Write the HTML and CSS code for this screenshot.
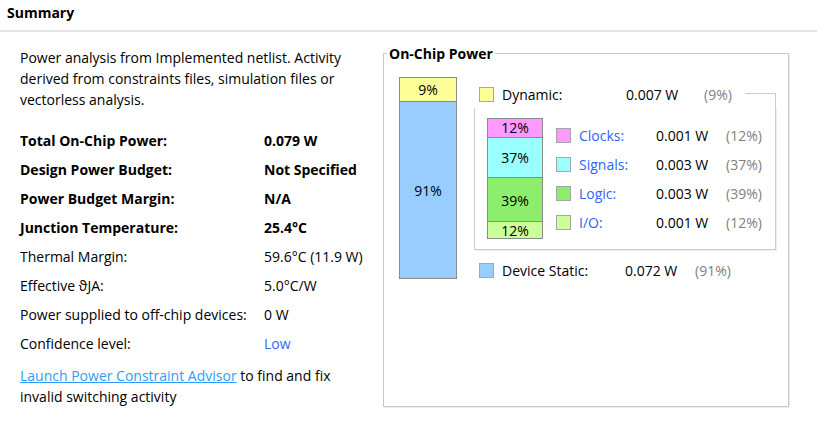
FILE: index.html
```html
<!DOCTYPE html>
<html>
<head>
<meta charset="utf-8">
<link rel="stylesheet" href="styles.css">
</head>
<body>
<div class="header">Summary</div>
<div class="content">
  <div class="left">
    <p class="para">Power analysis from Implemented netlist. Activity derived from constraints files, simulation files or vectorless analysis.</p>
    <div class="rows">
      <div class="row bold"><span class="label">Total On-Chip Power:</span><span>0.079 W</span></div>
      <div class="row bold"><span class="label">Design Power Budget:</span><span>Not Specified</span></div>
      <div class="row bold"><span class="label">Power Budget Margin:</span><span>N/A</span></div>
      <div class="row bold"><span class="label">Junction Temperature:</span><span>25.4°C</span></div>
      <div class="row"><span class="label">Thermal Margin:</span><span>59.6°C (11.9 W)</span></div>
      <div class="row"><span class="label">Effective ϑJA:</span><span>5.0°C/W</span></div>
      <div class="row"><span class="label">Power supplied to off-chip devices:</span><span>0 W</span></div>
      <div class="row"><span class="label">Confidence level:</span><span class="low">Low</span></div>
    </div>
    <p class="advisor"><a class="link" href="#">Launch Power Constraint Advisor</a> to find and fix invalid switching activity</p>
  </div>
  <div class="group">
    <div class="legend">On-Chip Power</div>
    <div class="group-inner">
      <div class="mainbar">
        <div class="seg seg-dyn">9%</div>
        <div class="seg seg-static">91%</div>
      </div>
      <div class="right">
        <div class="item-row dyn-row">
          <span class="sq c-yellow"></span>
          <span class="d-label">Dynamic:</span>
          <span class="d-value">0.007 W</span>
          <span class="pct">(9%)</span>
        </div>
        <div class="dyn-box">
          <div class="subbar">
            <div class="sub s-clk">12%</div>
            <div class="sub s-sig">37%</div>
            <div class="sub s-log">39%</div>
            <div class="sub s-io">12%</div>
          </div>
          <div class="sub-list">
            <div class="item-row sub-row"><span class="sq c-pink"></span><span class="s-label">Clocks:</span><span class="s-value">0.001 W</span><span class="pct">(12%)</span></div>
            <div class="item-row sub-row"><span class="sq c-cyan"></span><span class="s-label">Signals:</span><span class="s-value">0.003 W</span><span class="pct">(37%)</span></div>
            <div class="item-row sub-row"><span class="sq c-green"></span><span class="s-label">Logic:</span><span class="s-value">0.003 W</span><span class="pct">(39%)</span></div>
            <div class="item-row sub-row"><span class="sq c-lime"></span><span class="s-label">I/O:</span><span class="s-value">0.001 W</span><span class="pct">(12%)</span></div>
          </div>
        </div>
        <div class="item-row static-row">
          <span class="sq c-blue"></span>
          <span class="st-label">Device Static:</span>
          <span class="st-value">0.072 W</span>
          <span class="pct">(91%)</span>
        </div>
      </div>
    </div>
  </div>
</div>
</body>
</html>
```
FILE: styles.css
```css
html, body {
  margin: 0;
  padding: 0;
}
body {
  width: 817px;
  height: 432px;
  overflow: hidden;
  background: #ffffff;
  color: #000000;
  font-family: "Open Sans", "Noto Sans", "DejaVu Sans", sans-serif;
  font-size: 14px;
}
.header {
  height: 30px;
  line-height: 25px;
  padding-left: 7px;
  font-weight: bold;
  font-size: 14px;
  border-bottom: 2px solid #e6e6e6;
}
.content {
  display: flex;
  align-items: flex-start;
  padding-left: 20px;
}
.left {
  width: 363px;
  padding-top: 15px;
}
.para {
  margin: 0;
  width: 345px;
  line-height: 21px;
}
.rows {
  margin-top: 16px;
}
.row {
  display: flex;
  height: 29px;
  line-height: 29px;
  white-space: nowrap;
}
.row.bold {
  font-weight: bold;
}
.label {
  width: 244px;
  flex: none;
}
.low {
  color: #3366ff;
}
.advisor {
  margin: 7px 0 0 0;
  line-height: 21px;
  width: 335px;
}
.link {
  color: #2e9bff;
  text-decoration: underline;
}

/* On-Chip Power group */
.group {
  position: relative;
  margin-top: 21px;
  width: 404px;
  height: 352px;
  border: 1px solid #c9c9c9;
  box-shadow: 1px 1px 0 #ececec;
  padding: 0;
}
.legend {
  position: absolute;
  top: -10px;
  left: 3px;
  padding: 0 2px;
  background: #ffffff;
  font-weight: bold;
  line-height: 19px;
}
.group-inner {
  display: flex;
  align-items: flex-start;
  padding: 23px 0 0 15px;
}
.mainbar {
  width: 58px;
  height: 202px;
  box-sizing: border-box;
  border: 1px solid #8a8a8a;
  display: flex;
  flex-direction: column;
}
.seg {
  text-align: center;
}
.seg-dyn {
  height: 23px;
  line-height: 23px;
  background: #ffff99;
}
.seg-static {
  flex: 1;
  background: #99ccff;
  border-top: 1px solid #8a8a8a;
  display: flex;
  align-items: center;
  justify-content: center;
}
.right {
  margin-left: 17px;
  width: 302px;
}
.item-row {
  display: flex;
  align-items: center;
  white-space: nowrap;
}
.sq {
  width: 13px;
  height: 13px;
  border: 1px solid #a6a6a6;
  flex: none;
  margin-right: 8px;
}
.c-yellow { background: #ffff99; }
.c-blue { background: #99ccff; }
.c-pink { background: #ff99ff; }
.c-cyan { background: #99ffff; }
.c-green { background: #8cee6c; }
.c-lime { background: #ccff99; }
.pct {
  color: #808080;
}
.dyn-row {
  height: 20px;
  margin-top: 7px;
  padding-left: 5px;
}
.d-label { width: 124px; }
.d-value { width: 78px; }
.dyn-box {
  position: relative;
  margin-top: 4px;
  display: flex;
  align-items: center;
  padding: 10px 0 10px 12px;
  border-left: 1px solid #cdcdcd;
  border-right: 1px solid #cdcdcd;
  border-bottom: 1px solid #cdcdcd;
  box-shadow: 1px 1px 0 #ededed;
}
.dyn-box::before {
  content: "";
  position: absolute;
  right: -1px;
  top: -15px;
  width: 30px;
  height: 15px;
  border-top: 1px solid #cdcdcd;
  border-right: 1px solid #cdcdcd;
}
.subbar {
  width: 56px;
  height: 121px;
  box-sizing: border-box;
  border: 1px solid #8a8a8a;
  display: flex;
  flex-direction: column;
  flex: none;
}
.sub {
  text-align: center;
}
.s-clk { height: 18px; line-height: 18px; background: #ff99ff; }
.s-sig { height: 39px; line-height: 39px; background: #99ffff; border-top: 1px solid #8a8a8a; }
.s-log { height: 43px; line-height: 45px; background: #8cee6c; border-top: 1px solid #8a8a8a; }
.s-io { height: 16px; line-height: 18px; background: #ccff99; border-top: 1px solid #8a8a8a; }
.sub-list {
  margin-left: 13px;
}
.sub-row {
  height: 29px;
}
.s-label {
  width: 77px;
  color: #2f63ff;
}
.s-value { width: 70px; }
.static-row {
  height: 20px;
  margin-top: 10px;
  padding-left: 5px;
}
.st-label { width: 123px; }
.st-value { width: 70px; }
```
